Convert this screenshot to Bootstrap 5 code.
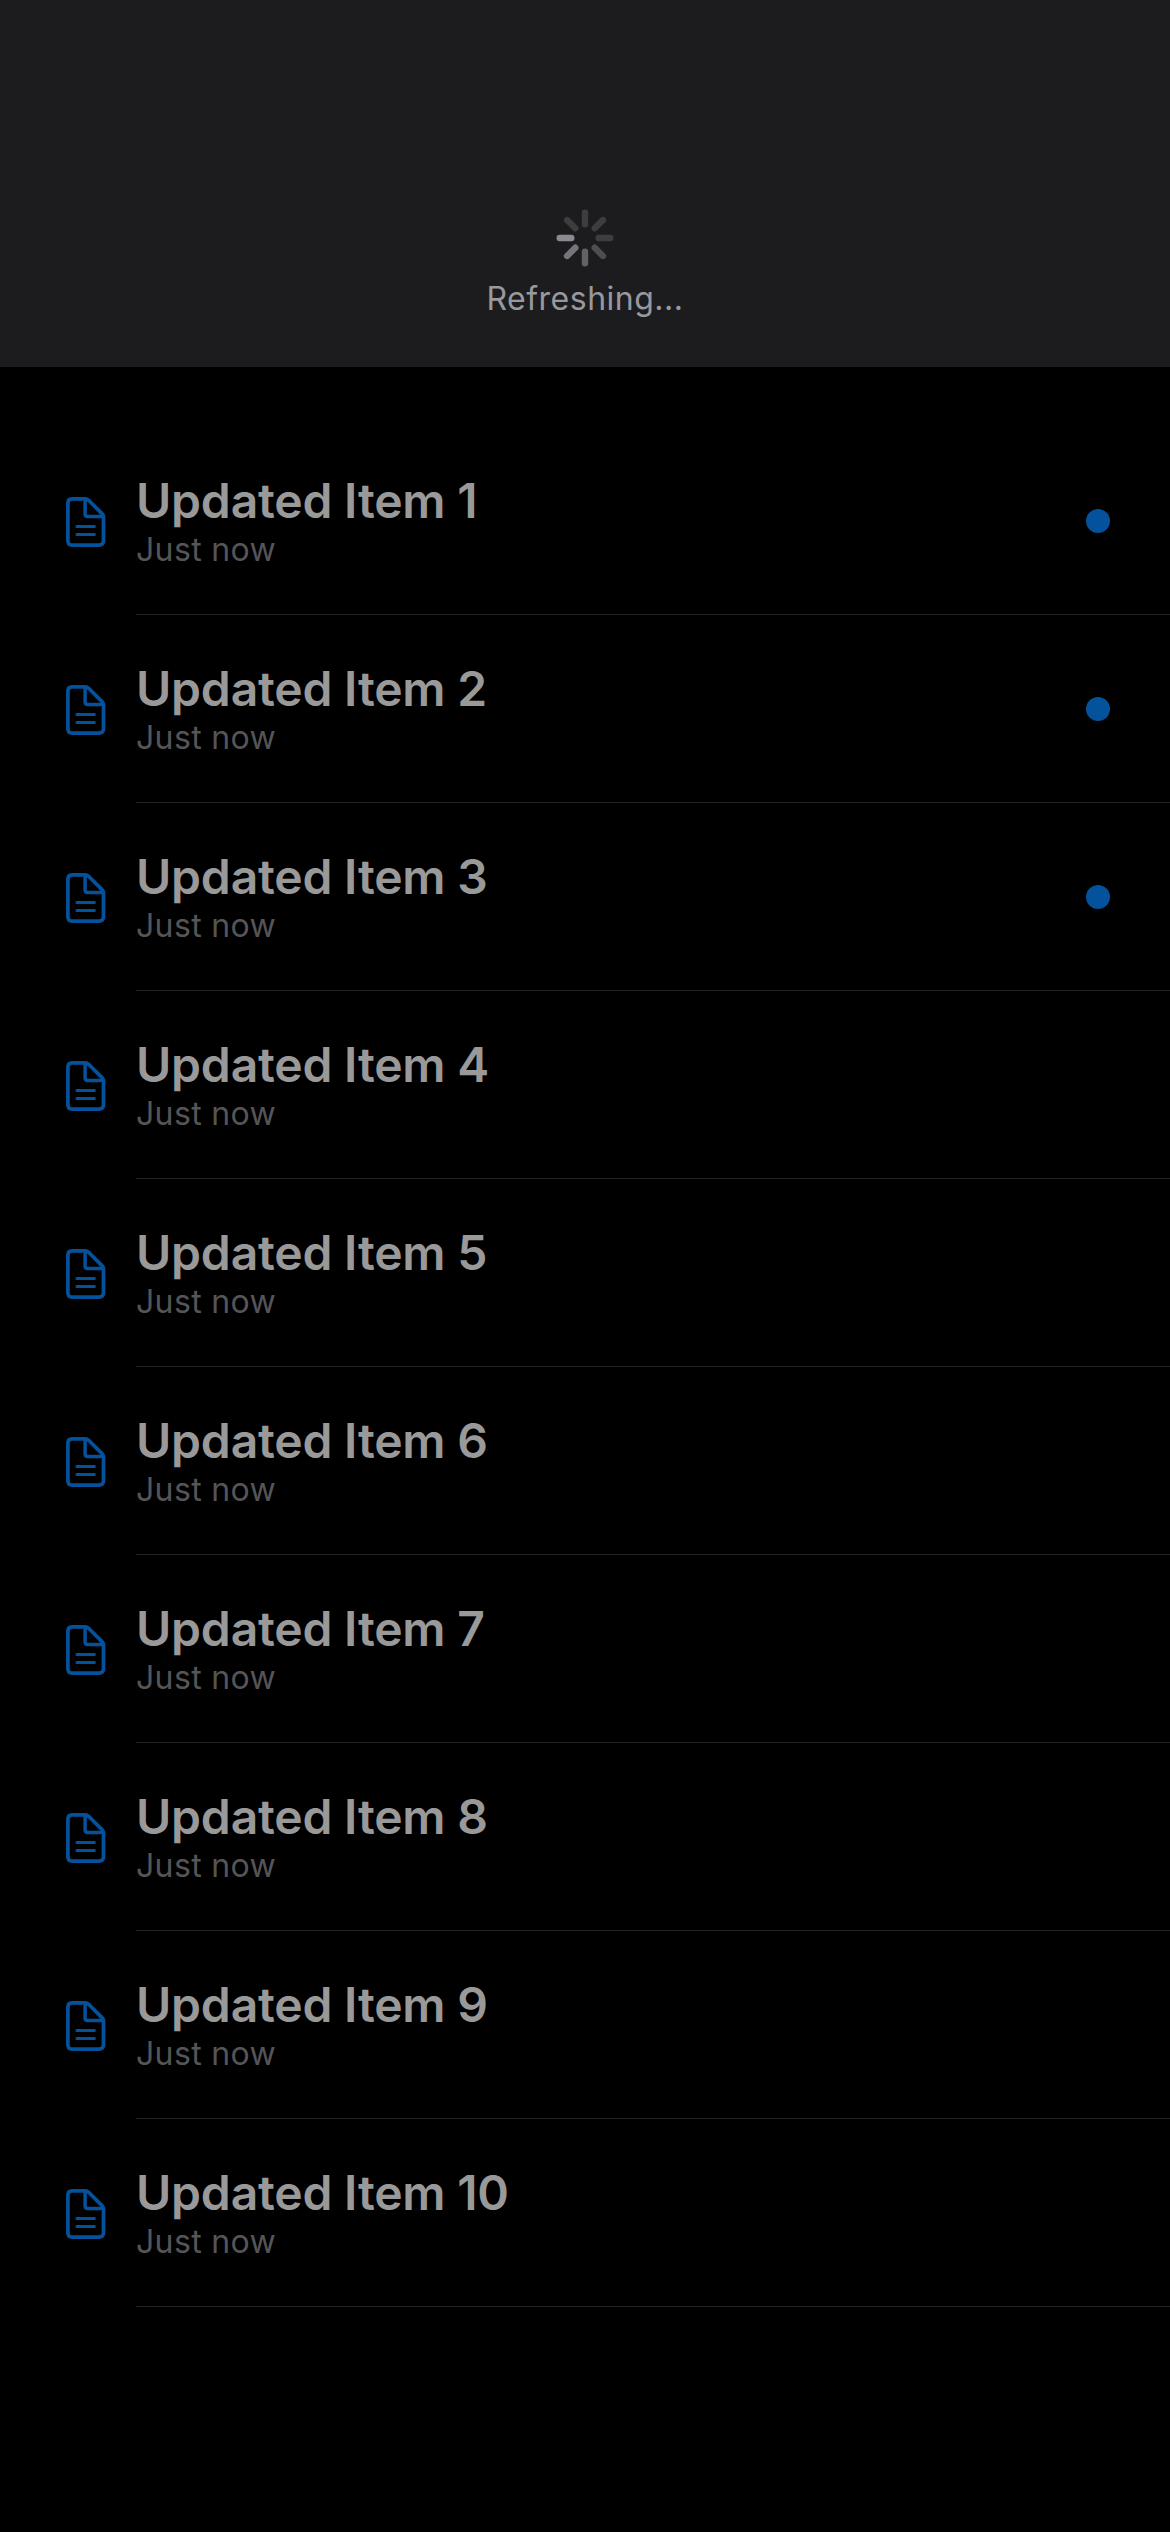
<!DOCTYPE html>
<html lang="en" data-bs-theme="dark">
<head>
<meta charset="utf-8">
<meta name="viewport" content="width=device-width, initial-scale=1">
<title>Updated Items</title>
<link href="https://cdn.jsdelivr.net/npm/bootstrap@5.3.0/dist/css/bootstrap.min.css" rel="stylesheet">
<style>
body{background:#000;font-family:Inter,"Liberation Sans",sans-serif;height:2532px;overflow:hidden}
.refresh-head{height:367px;background:#1c1c1e;padding-top:209px}
.refresh-text{font-size:32px;line-height:40px;margin-top:12px;color:#98989f;letter-spacing:.5px}
.item-list{margin-top:60px}
.item-row{height:188px;padding-left:66px}
.doc-icon{width:40px;height:50px;margin-top:2px;color:#04529c}
.item-main{margin-left:30px;border-bottom:1px solid #212123;padding-right:60px}
.item-title{font-size:48px;font-weight:600;line-height:52px;color:#999;letter-spacing:-.2px}
.item-sub{font-size:32px;line-height:40px;color:#555558;letter-spacing:.35px;margin-top:3px}
.item-text{padding-top:48px}
.unread{width:24px;height:24px;background:#04529c}
</style>
<script src="https://cdn.jsdelivr.net/npm/bootstrap@5.3.0/dist/js/bootstrap.bundle.min.js"></script>
</head>
<body>
<svg class="d-none">
<symbol id="doc" viewBox="0 0 40 50"><g fill="none" stroke="currentColor" stroke-linecap="round" stroke-linejoin="round"><path stroke-width="3.7" d="M6.2 1.9H19.2Q21.2 1.9 22.6 3.3L36 16.6Q37.5 18.2 37.5 20.4V43.6Q37.5 48.1 33 48.1H6.3Q1.9 48.1 1.9 43.7V6.3Q1.9 1.9 6.2 1.9Z"/><path stroke-width="3.5" d="M19.1 2.5V16.8Q19.1 19.6 21.9 19.6H37"/><path stroke-width="3" d="M10.9 29.4H28.4M10.9 37.5H28.4"/></g></symbol>
</svg>
<header class="refresh-head d-flex flex-column align-items-center">
<svg width="58" height="58" viewBox="-29 -29 58 58" stroke-width="6.4" stroke-linecap="round">
<path stroke="#3d3d40" d="M0-13.7V-25.3M9.7-9.7L17.9-17.9M13.7 0H25.3M-9.7-9.7L-17.9-17.9"/>
<path stroke="#4e4e51" d="M9.7 9.7L17.9 17.9"/>
<path stroke="#626165" d="M0 13.7V25.3"/>
<path stroke="#76757b" d="M-9.7 9.7L-17.9 17.9"/>
<path stroke="#8b8a90" d="M-13.7 0H-25.3"/>
</svg>
<div class="refresh-text">Refreshing...</div>
</header>
<main class="item-list" id="items"></main>
<script>
document.getElementById('items').innerHTML = Array.from({length: 10}, (_, i) => `
<div class="item-row d-flex align-items-center">
<svg class="doc-icon flex-shrink-0"><use href="#doc"/></svg>
<div class="item-main d-flex flex-grow-1 h-100 justify-content-between align-items-center">
<div class="item-text align-self-start"><div class="item-title">Updated Item ${i + 1}</div><div class="item-sub">Just now</div></div>
${i < 3 ? '<span class="unread rounded-circle"></span>' : ''}
</div>
</div>`).join('');
</script>
</body>
</html>
